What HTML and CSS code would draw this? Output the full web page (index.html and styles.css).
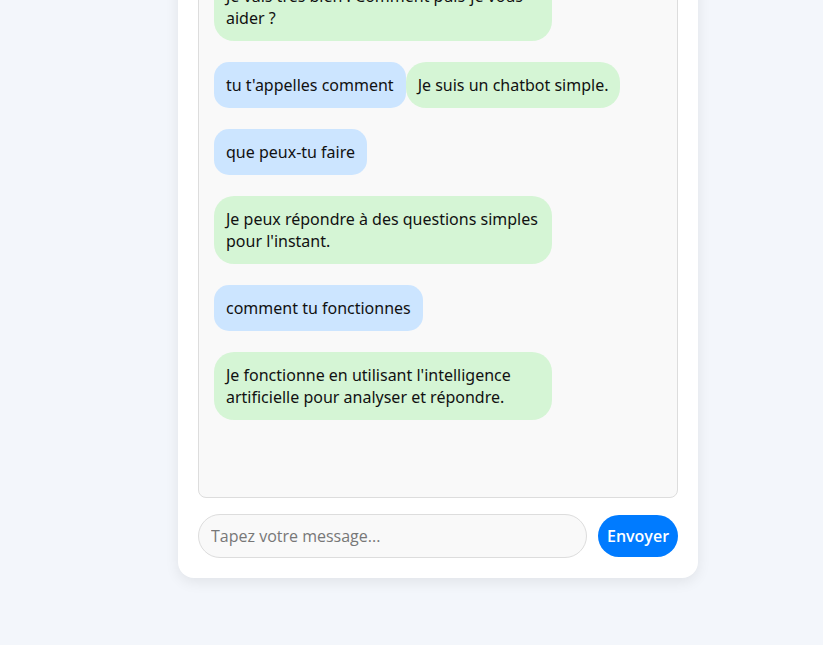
FILE: index.html
```html
<!DOCTYPE html>
<html lang="fr">
<head>
<meta charset="utf-8">
<title>Chatbot</title>
<link rel="stylesheet" href="styles.css">
</head>
<body>
<div class="card">
  <h2 class="title">Chatbot</h2>
  <div class="chat-box"><div class="msg user">bonjour</div><div class="msg bot">Bonjour ! Comment puis-je vous aider ?</div><div class="msg user">comment ça va</div><div class="msg bot">Je vais très bien ! Comment puis-je vous aider ?</div><div class="msg user">tu t'appelles comment</div><div class="msg bot">Je suis un chatbot simple.</div><div class="msg user">que peux-tu faire</div><div class="msg bot">Je peux répondre à des questions simples pour l'instant.</div><div class="msg user">comment tu fonctionnes</div><div class="msg bot">Je fonctionne en utilisant l'intelligence artificielle pour analyser et répondre.</div></div>
  <div class="input-row">
    <input class="msg-input" type="text" placeholder="Tapez votre message...">
    <button class="send-btn" type="button">Envoyer</button>
  </div>
</div>
</body>
</html>
```
FILE: styles.css
```css
* { box-sizing: border-box; }
html, body { margin: 0; height: 100%; }
body {
  background: #f3f6fb;
  font-family: "Noto Sans", "Open Sans", sans-serif;
  display: flex;
  flex-direction: column;
  justify-content: flex-end;
  align-items: center;
  overflow: hidden;
  padding: 0 0 67px 53px;
}
.card {
  width: 520px;
  flex-shrink: 0;
  background: #fff;
  border-radius: 16px;
  box-shadow: 0 4px 14px rgba(0, 0, 0, 0.08);
  padding: 20px;
}
.title {
  margin: 0 0 16px;
  text-align: center;
  color: #333;
}
.chat-box {
  background: #f9f9f9;
  border: 1px solid #ddd;
  border-radius: 8px;
  padding: 16px 15px 77px;
  display: flex;
  flex-wrap: wrap;
  align-items: flex-start;
  align-content: flex-start;
  row-gap: 21px;
}
.msg {
  max-width: 338px;
  padding: 12px;
  font-size: 16px;
  line-height: 22px;
  color: #111;
}
.user {
  background: #cce5ff;
  border-radius: 15px;
}
.bot {
  background: #d5f5d5;
  border-radius: 20px;
}
.input-row {
  display: flex;
  align-items: center;
  gap: 11px;
  margin-top: 16px;
}
.msg-input {
  flex: 1;
  min-width: 0;
  height: 44px;
  padding: 0 12px;
  border: 1px solid #ddd;
  border-radius: 22px;
  background: #f9f9f9;
  font-family: "Open Sans", sans-serif;
  font-size: 16px;
  color: #333;
  outline: none;
}
.msg-input::placeholder { color: #777; }
.send-btn {
  width: 80px;
  height: 42px;
  border: none;
  border-radius: 21px;
  background: #007bff;
  color: #fff;
  font-family: "Open Sans", sans-serif;
  font-weight: 600;
  font-size: 16px;
  padding: 0;
}
```
